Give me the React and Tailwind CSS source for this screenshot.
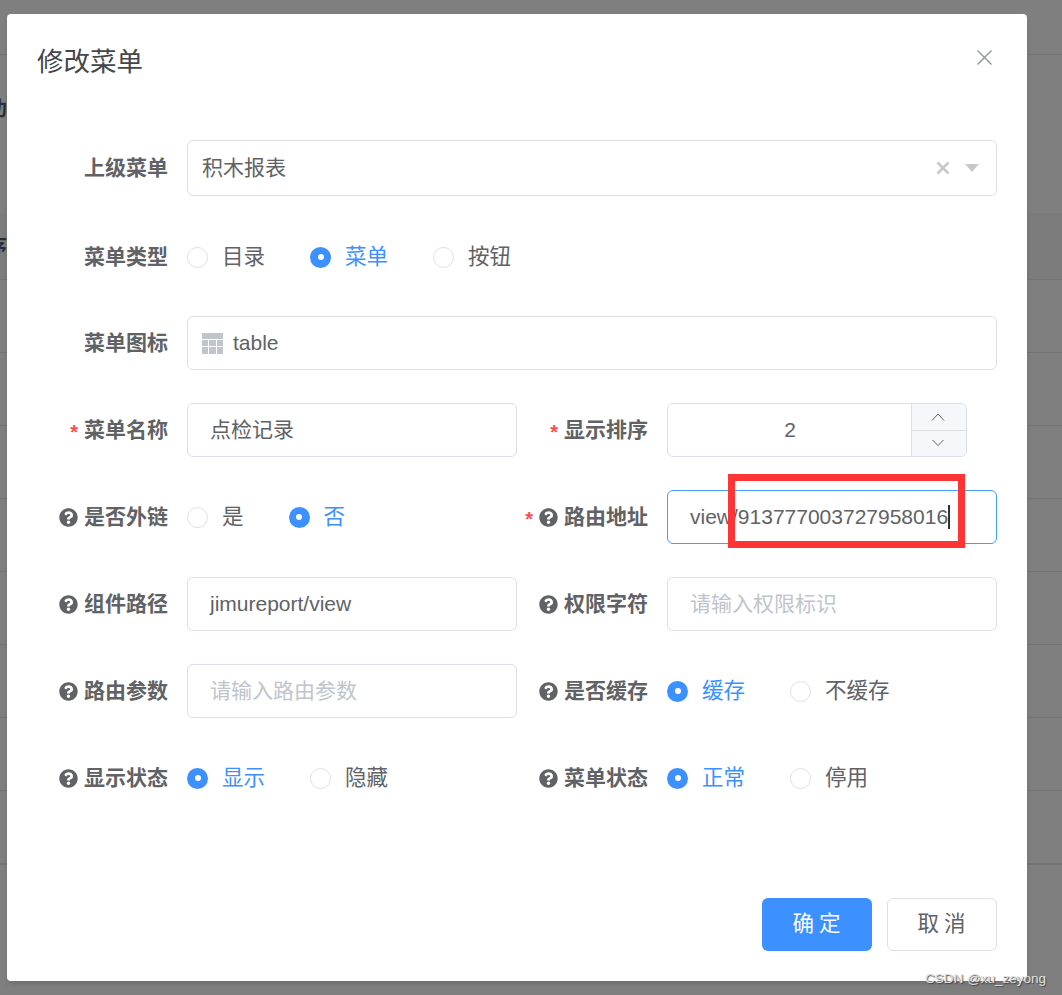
import { FaQuestionCircle } from "react-icons/fa";

function Background() {
  const rows = [1, 2, 3, 4, 5, 6, 7];
  return (
    <div className="flex flex-col h-full">
      <div className="h-[55px] border-b border-[#747474] shrink-0"></div>
      <div className="h-[158px] shrink-0 flex items-center overflow-hidden">
        <span className="block w-[7px] overflow-hidden -mt-[50px]">
          <span className="block w-[20px] -ml-[13px] text-[20px] font-bold text-[#2b3038]">功</span>
        </span>
      </div>
      <div className="h-[67px] border-b border-[#747474] bg-[#7c7c7c] shrink-0 flex items-center overflow-hidden">
        <span className="block w-[7px] overflow-hidden mt-[2px]">
          <span className="block w-[20px] -ml-[13px] text-[20px] font-bold text-[#2b3038]">序</span>
        </span>
      </div>
      {rows.map((r) => (
        <div key={r} className="h-[73px] border-b border-[#747474] shrink-0"></div>
      ))}
      <div className="h-[74px] border-b-2 border-[#737378] shrink-0"></div>
    </div>
  );
}

function Label({ text, star, help }) {
  return (
    <div className="w-[150px] shrink-0 pr-[19px] flex items-center justify-end font-bold text-[21px] text-[#606266]">
      {star && <span className="text-[#ff4d4f] font-bold mr-[6px] leading-none mt-[4px] text-[20px]">*</span>}
      {help && <FaQuestionCircle className="text-[19px] mr-[6px] text-[#606266]" />}
      <span>{text}</span>
    </div>
  );
}

function Radio({ text, checked }) {
  return (
    <div className="flex items-center mr-[45px]">
      {checked ? (
        <span className="w-[21px] h-[21px] rounded-full bg-[#3d90ff] flex items-center justify-center">
          <span className="w-[6px] h-[6px] rounded-full bg-white"></span>
        </span>
      ) : (
        <span className="w-[21px] h-[21px] rounded-full border border-[#dcdfe6] bg-white"></span>
      )}
      <span className={"ml-[14px] text-[21.5px] " + (checked ? "text-[#3d90ff]" : "text-[#606266]")}>{text}</span>
    </div>
  );
}

function Box({ children, className }) {
  return (
    <div className={"w-[330px] h-[54px] rounded-[6px] border flex items-center px-[22px] text-[21px] " + className}>
      {children}
    </div>
  );
}

function TableIcon() {
  return (
    <svg width="21" height="21" viewBox="0 0 21 21" className="shrink-0">
      <rect x="0" y="0" width="21" height="6" fill="#c0c4cc" />
      <rect x="0" y="7" width="6" height="6" fill="#c0c4cc" />
      <rect x="7" y="7" width="7" height="6" fill="#c0c4cc" />
      <rect x="15" y="7" width="6" height="6" fill="#c0c4cc" />
      <rect x="0" y="14" width="6" height="7" fill="#c0c4cc" />
      <rect x="7" y="14" width="7" height="7" fill="#c0c4cc" />
      <rect x="15" y="14" width="6" height="7" fill="#c0c4cc" />
    </svg>
  );
}

function Chevron({ up }) {
  return (
    <svg width="14" height="8" viewBox="0 0 14 8" fill="none" stroke="#606266" strokeWidth="1">
      <path d={up ? "M1 7.5 L7 1 L13 7.5" : "M1.5 1 L7 6.5 L12.5 1"} />
    </svg>
  );
}

export default function App() {
  return (
    <div
      className="relative w-[1062px] h-[995px] overflow-hidden bg-[#7f7f7f]"
      style={{ fontFamily: '"Liberation Sans","Noto Sans CJK SC",sans-serif' }}
    >
      <Background />

      <div className="absolute left-[7px] top-[14px] w-[1020px] h-[967px] bg-white rounded-[4px] shadow-md px-[30px] pb-[30px] flex flex-col">
        <div className="flex items-center justify-between h-[94px] shrink-0">
          <span className="text-[26.5px] text-[#444649] mt-[3px]">修改菜单</span>
          <svg width="17" height="17" viewBox="0 0 17 17" stroke="#909399" strokeWidth="1.4" className="mr-[4px] -mt-[8px]">
            <path d="M1.5 1.5 L15.5 15.5 M15.5 1.5 L1.5 15.5" />
          </svg>
        </div>

        <div className="mt-[32px] flex flex-col gap-[33px]">
          <div className="flex h-[56px]">
            <Label text="上级菜单" />
            <div className="flex-1 rounded-[6px] border border-[#dcdfe6] flex items-center pl-[14px] pr-[17px] text-[21px] text-[#606266]">
              <span className="flex-1">积木报表</span>
              <svg width="14" height="14" viewBox="0 0 14 14" stroke="#c8c8c8" strokeWidth="2.6" className="mr-[15px]">
                <path d="M1.5 1.5 L12.5 12.5 M12.5 1.5 L1.5 12.5" />
              </svg>
              <span className="w-0 h-0 border-x-[7px] border-x-transparent border-t-[8px] border-t-[#c8c8c8]"></span>
            </div>
          </div>

          <div className="flex h-[54px] pt-[2px]">
            <Label text="菜单类型" />
            <div className="flex items-center">
              <Radio text="目录" />
              <Radio text="菜单" checked />
              <Radio text="按钮" />
            </div>
          </div>

          <div className="flex h-[54px]">
            <Label text="菜单图标" />
            <div className="flex-1 rounded-[6px] border border-[#dcdfe6] flex items-center pl-[14px] text-[21px] text-[#606266]">
              <TableIcon />
              <span className="ml-[10px]">table</span>
            </div>
          </div>

          <div className="grid grid-cols-2">
            <div className="flex h-[54px]">
              <Label text="菜单名称" star />
              <Box className="border-[#dcdfe6] text-[#606266]">点检记录</Box>
            </div>
            <div className="flex h-[54px]">
              <Label text="显示排序" star />
              <div className="w-[300px] rounded-[6px] border border-[#dcdfe6] flex text-[21px] text-[#606266] overflow-hidden">
                <div className="flex-1 flex items-center justify-center pl-[1px]">2</div>
                <div className="w-[55px] border-l border-[#dcdfe6] bg-[#f5f7fa] flex flex-col">
                  <div className="flex-1 flex items-center justify-center border-b border-[#dcdfe6] pr-[2px]">
                    <Chevron up />
                  </div>
                  <div className="flex-1 flex items-center justify-center pr-[2px]">
                    <Chevron />
                  </div>
                </div>
              </div>
            </div>
          </div>

          <div className="grid grid-cols-2">
            <div className="flex h-[54px]">
              <Label text="是否外链" help />
              <div className="flex items-center">
                <Radio text="是" />
                <Radio text="否" checked />
              </div>
            </div>
            <div className="flex h-[54px]">
              <Label text="路由地址" star help />
              <Box className="border-[#409eff] text-[#606266]">
                <span>view/913777003727958016</span>
                <span className="w-[1.5px] h-[24px] bg-[#303133]"></span>
              </Box>
            </div>
          </div>

          <div className="grid grid-cols-2">
            <div className="flex h-[54px]">
              <Label text="组件路径" help />
              <Box className="border-[#dcdfe6] text-[#606266]">jimureport/view</Box>
            </div>
            <div className="flex h-[54px]">
              <Label text="权限字符" help />
              <Box className="border-[#dcdfe6] text-[#c0c4cc]">请输入权限标识</Box>
            </div>
          </div>

          <div className="grid grid-cols-2">
            <div className="flex h-[54px]">
              <Label text="路由参数" help />
              <Box className="border-[#dcdfe6] text-[#c0c4cc]">请输入路由参数</Box>
            </div>
            <div className="flex h-[54px]">
              <Label text="是否缓存" help />
              <div className="flex items-center">
                <Radio text="缓存" checked />
                <Radio text="不缓存" />
              </div>
            </div>
          </div>

          <div className="grid grid-cols-2">
            <div className="flex h-[54px]">
              <Label text="显示状态" help />
              <div className="flex items-center">
                <Radio text="显示" checked />
                <Radio text="隐藏" />
              </div>
            </div>
            <div className="flex h-[54px]">
              <Label text="菜单状态" help />
              <div className="flex items-center">
                <Radio text="正常" checked />
                <Radio text="停用" />
              </div>
            </div>
          </div>
        </div>

        <div className="mt-auto flex justify-end gap-[15px]">
          <button className="w-[110px] h-[53px] pl-[4px] rounded-[6px] bg-[#3d90ff] text-white text-[21.5px] tracking-[5px]">确定</button>
          <button className="w-[110px] h-[53px] pl-[4px] rounded-[6px] border border-[#dcdfe6] bg-white text-[#606266] text-[21.5px] tracking-[5px]">取消</button>
        </div>
      </div>

      <div className="absolute left-[728px] top-[474px] w-[237px] h-[74px] border-[7px] border-[#ff3535]"></div>

      <div className="absolute left-[925px] top-[969px] text-[13.5px] text-[#e0e0e0] [text-shadow:1px_1px_1px_#444]">CSDN @xu_zeyong</div>
    </div>
  );
}
